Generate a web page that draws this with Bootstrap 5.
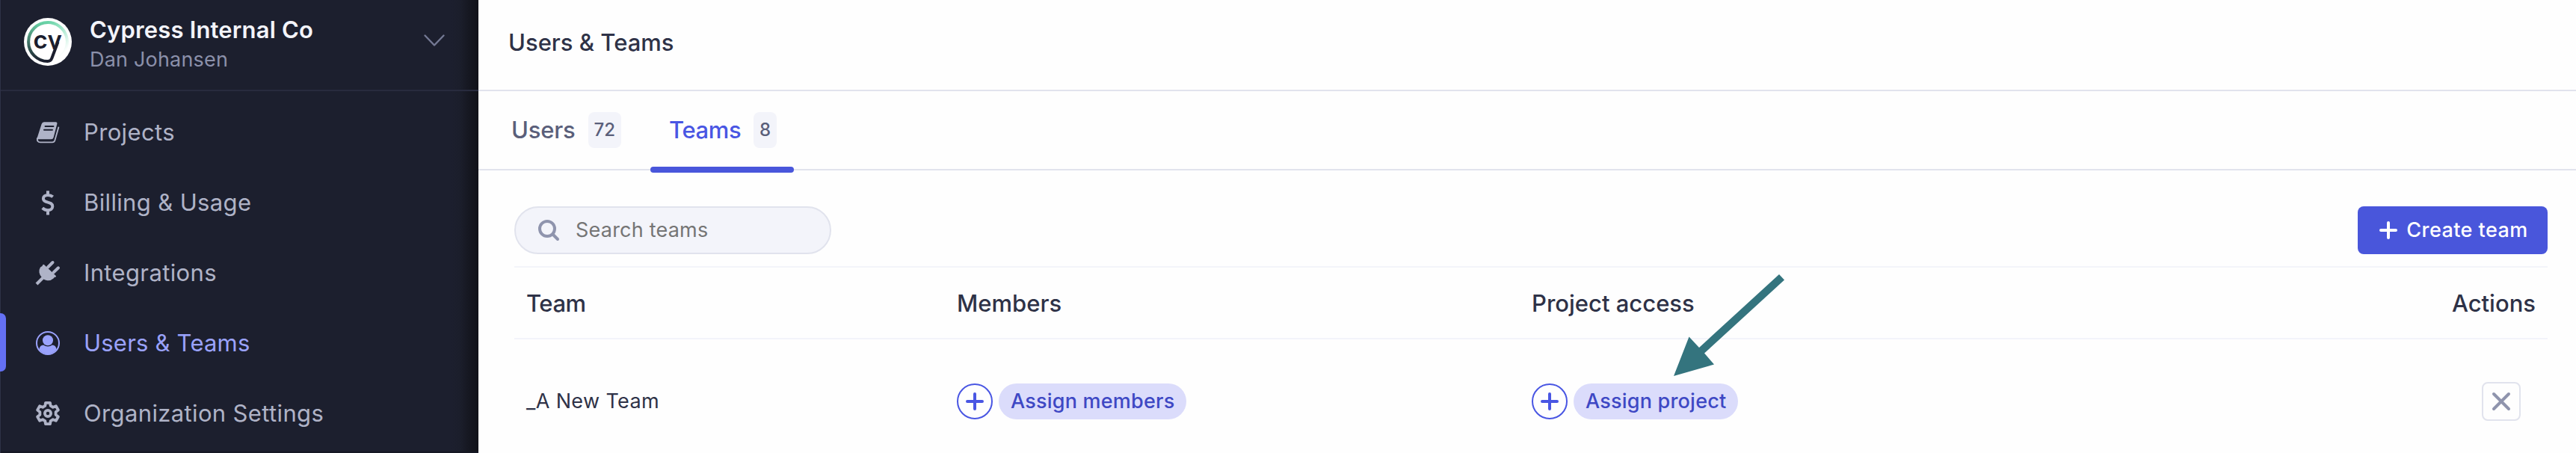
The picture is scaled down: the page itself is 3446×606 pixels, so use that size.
<!DOCTYPE html>
<html lang="en">
<head>
<meta charset="utf-8">
<meta name="viewport" content="width=device-width, initial-scale=1">
<title>Users &amp; Teams</title>
<link rel="stylesheet" href="https://cdn.jsdelivr.net/npm/bootstrap@5.3.0/dist/css/bootstrap.min.css">
<style>
  body { font-family: Inter, "Liberation Sans", sans-serif; font-size: 31px; line-height: 40px; color: #2e3247; background: #fefefe; }
  svg { display: block; flex: none; overflow: visible; }
  .app { height: 606px; }
  .sidebar { width: 640px; background: linear-gradient(to left, #111219 0, #161822 14px, #1b1e2b 24px, #1c1f2e 36px); border-left: 1px solid #2e3247; box-shadow: inset 0 -2px 1px #161824; }
  .org { height: 122px; padding: 0 45px 0 31px; border-bottom: 2px solid #282b3e; }
  .org-logo { margin-top: -8px; }
  .org-caret { margin-top: -12px; }
  .org-name { font-weight: 600; color: #f3f4fa; letter-spacing: .16px; }
  .org-user { font-size: 27px; color: #8b90aa; letter-spacing: .19px; }
  .side-nav { padding-top: 7px; }
  .side-nav .nav-link { height: 94px; padding: 1px 0 0 47px; gap: 32px; color: #afb3c7; letter-spacing: .36px; }
  .side-nav .nav-link.active { color: #9aa2fc; letter-spacing: .21px; }
  .side-nav .nav-link.active::before { content: ""; position: absolute; left: -1px; top: 8px; width: 8px; height: 78px; border-radius: 0 7px 7px 0; background: #6470f3; }
  .topbar { height: 122px; padding: 0 40px 6px; border-bottom: 2px solid #e1e3ed; font-weight: 500; }
  .tabs { height: 106px; padding-left: 20px; gap: 15px; border-bottom: 2px solid #e1e3ed; }
  .tabs .nav-link { width: 195px; height: 104px; padding: 0 24px; justify-content: space-between; font-weight: 500; color: #5a5f7a; letter-spacing: -.21px; }
  .tabs .nav-link.active { width: 192px; padding: 0 23px 0 25px; color: #4956e3; letter-spacing: -.37px; }
  .tabs .nav-link.active::after { content: ""; position: absolute; left: 0; right: 0; bottom: -5px; height: 8px; border-radius: 4px; background: #4956db; }
  .count { height: 48px; line-height: 48px; padding: 0 8px; border-radius: 8px; background: #f3f4fa; color: #5a5f7a; font-size: 24px; letter-spacing: 0; }
  .content { padding: 48px 38px 0 48px; }
  .search { width: 424px; height: 64px; padding-left: 30px; gap: 22px; border: 2px solid #e1e3ed; border-radius: 32px; background: #f3f4fa; }
  .search input { font-size: 27px; letter-spacing: .22px; }
  .search input::placeholder { color: #757575; opacity: 1; }
  .btn-create { width: 254px; height: 64px; border-radius: 8px; background: #4956db; color: #fff; font-size: 27px; font-weight: 500; gap: 12px; letter-spacing: .45px; padding-left: 3px !important; }
  .team-table { margin: 16px 0 0; table-layout: fixed; border-collapse: separate; border-spacing: 0; --bs-table-bg: transparent; border-top: 2px solid #f3f4fa; }
  .team-table > :not(caption) > * > * { padding: 0 16px; vertical-align: middle; border-bottom: 0; color: #2e3247; }
  .team-table th { height: 96px; padding-bottom: 1px !important; font-weight: 500; box-shadow: inset 0 -2px #f3f4fa; }
  .team-table td { height: 166px; font-size: 27px; }
  .col-team { width: 576px; } .col-members { width: 769px; }
  .tight { letter-spacing: -.45px; }
  .team-name { letter-spacing: .37px; }
  .circle-btn { width: 48px; height: 48px; border: 2px solid #4956e3; border-radius: 50%; }
  .pill { height: 48px; line-height: 48px; padding: 0 16px; border-radius: 24px; background: #dbdcfb; color: #3e48c4; font-weight: 500; letter-spacing: .21px; }
  .btn-remove { width: 52px; height: 52px; margin-right: 20px; border: 2px solid #e1e3ed; border-radius: 8px; }
  .arrow { left: 2239px; top: 367px; }
</style>
</head>
<body>
<div class="app d-flex position-relative overflow-hidden">
  <aside class="sidebar flex-shrink-0 d-flex flex-column">
    <div class="org d-flex align-items-center">
      <svg class="org-logo" width="64" height="64" viewBox="0 0 64 64">
        <defs>
          <linearGradient id="gl" x1="0" y1="1" x2="0" y2="0"><stop offset="0" stop-color="#1b1e2e"/><stop offset=".25" stop-color="#2c4a4a"/><stop offset=".7" stop-color="#539a80"/><stop offset="1" stop-color="#69d3a7"/></linearGradient>
          <linearGradient id="gr" x1="0" y1="0" x2=".6" y2="1"><stop offset="0" stop-color="#69d3a7"/><stop offset=".45" stop-color="#a3e7cb"/><stop offset="1" stop-color="#fff"/></linearGradient>
          <clipPath id="letters"><rect width="64" height="42"/></clipPath>
        </defs>
        <circle cx="32" cy="32" r="32" fill="#fff"/>
        <path d="M32.200 6A26 26 0 0 0 32 58" fill="none" stroke="url(#gl)" stroke-width="4"/>
        <path d="M32 6A26 26 0 0 1 47 53.200" fill="none" stroke="url(#gr)" stroke-width="4"/>
        <path d="M45.500 32L37.300 54Q36 58 31.500 58" fill="none" stroke="#1b1e2e" stroke-width="4"/>
        <text clip-path="url(#letters)" x="12.500" y="40.500" font-size="33" font-weight="600" fill="#1b1e2e" textLength="38.500" lengthAdjust="spacing">cy</text>
      </svg>
      <div class="ms-4 flex-grow-1">
        <div class="org-name">Cypress Internal Co</div>
        <div class="org-user">Dan Johansen</div>
      </div>
      <svg class="org-caret" width="28" height="16" viewBox="0 0 28 16" fill="none" stroke="#747994" stroke-width="2.400" stroke-linecap="round" stroke-linejoin="round"><path d="M1.500 1.500L14 14.500L26.500 1.500"/></svg>
    </div>
    <nav class="side-nav nav flex-column flex-nowrap">
      <a class="nav-link d-flex align-items-center" href="#">
        <svg width="32" height="32" viewBox="0 0 32 32"><path fill="currentColor" d="M11 2.300H26.500Q29 2.300 28.300 5L23.600 23Q23 25.200 20.500 25.200H2.500Q1.300 25 2 22.500L7.600 5Q8.400 2.300 11 2.300Z"/><path d="M1.900 24Q1.300 29.400 6 29.400H22Q24.500 29.400 25.300 27L30.300 9.500" fill="none" stroke="currentColor" stroke-width="1.900" stroke-linecap="round"/><path d="M12.500 8H23.500M11 12.800H22" stroke="#1c1f2e" stroke-width="1.900" stroke-linecap="round"/></svg>
        Projects</a>
      <a class="nav-link d-flex align-items-center" href="#">
        <svg width="32" height="32" viewBox="0 0 32 32" fill="none" stroke="currentColor" stroke-width="4"><path d="M22.700 8.300C20.500 6.400 18.200 5.900 16 5.900C12 5.900 9.900 8 9.900 10.700C9.900 17.500 22.300 13.700 22.300 21C22.300 24.300 19.500 26.200 16 26.200C13.300 26.200 11 25.300 8.700 23.200M16 .2V5M16 27V32.500"/></svg>
        Billing &amp; Usage</a>
      <a class="nav-link d-flex align-items-center" href="#">
        <svg width="32" height="32" viewBox="0 0 32 32" stroke="currentColor" stroke-linecap="round"><path fill="currentColor" stroke="none" d="M9.500 5Q10.500 4.500 11.500 5.500L26.800 20Q27.500 21 26.500 21.500Q24.500 21.500 23.500 23.500A10.500 10.500 0 0 1 8 22A10.500 10.500 0 0 1 6 8.500Q9 7 9.500 5Z"/><path d="M16 8.500L22.500 2M23.500 15.500L30 9.300" stroke-width="4"/><path d="M9.500 22.500L1 31" stroke-width="4" stroke-linecap="butt"/></svg>
        Integrations</a>
      <a class="nav-link active position-relative d-flex align-items-center" href="#">
        <svg width="32" height="32" viewBox="0 0 32 32" fill="currentColor"><circle cx="16" cy="16" r="15" fill="none" stroke="currentColor" stroke-width="2"/><circle cx="16" cy="12.200" r="7"/><path d="M4.200 24.500C5 20.500 7 18.500 10 18.500C14 21 18 21 22 18.500C25 18.500 27 20.500 27.800 24.500A15 15 0 0 1 4.200 24.500Z"/></svg>
        Users &amp; Teams</a>
      <a class="nav-link d-flex align-items-center" href="#">
        <svg width="32" height="32" viewBox="-16 -16 32 32" fill="none" stroke="currentColor" stroke-width="3.800" stroke-linejoin="round"><path d="M-3.700-10.100L-3-14.100H3L3.700-10.100L6.900-8.250L10.880-9.750L13.880-4.550L10.600-1.850V1.850L13.880 4.550L10.880 9.750L6.900 8.250L3.700 10.100L3 14.100H-3L-3.700 10.100L-6.900 8.250L-10.880 9.750L-13.880 4.550L-10.600 1.850V-1.850L-13.880-4.550L-10.880-9.750L-6.900-8.250Z"/><circle r="4.100"/></svg>
        Organization Settings</a>
    </nav>
  </aside>
  <main class="flex-grow-1">
    <header class="topbar d-flex align-items-center">Users &amp; Teams</header>
    <nav class="tabs nav flex-nowrap">
      <a class="nav-link d-flex align-items-center" href="#">Users <span class="count">72</span></a>
      <a class="nav-link active position-relative d-flex align-items-center" href="#">Teams <span class="count">8</span></a>
    </nav>
    <section class="content">
      <div class="d-flex justify-content-between">
        <label class="search d-flex align-items-center">
          <svg width="28" height="28" viewBox="0 0 28 28" fill="none" stroke="#8f94ad" stroke-width="4" stroke-linecap="round"><circle cx="12" cy="12" r="10"/><path d="M19.500 19.500L26 26"/></svg>
          <input class="form-control border-0 bg-transparent shadow-none p-0" type="text" placeholder="Search teams">
        </label>
        <button class="btn-create btn border-0 p-0 d-flex align-items-center justify-content-center">
          <svg width="24" height="24" viewBox="0 0 24 24" stroke="#fff" stroke-width="4" stroke-linecap="round"><path d="M12 2V22M2 12H22"/></svg>
          Create team</button>
      </div>
      <table class="team-table table">
        <thead>
          <tr><th class="col-team tight">Team</th><th class="col-members">Members</th><th>Project access</th><th class="text-end">Actions</th></tr>
        </thead>
        <tbody>
          <tr>
            <td class="team-name">_A New Team</td>
            <td><div class="d-flex gap-2"><span class="circle-btn d-flex align-items-center justify-content-center"><svg width="24" height="24" viewBox="0 0 24 24" stroke="#4956e3" stroke-width="4" stroke-linecap="round"><path d="M12 2V22M2 12H22"/></svg></span><span class="pill">Assign members</span></div></td>
            <td><div class="d-flex gap-2"><span class="circle-btn d-flex align-items-center justify-content-center"><svg width="24" height="24" viewBox="0 0 24 24" stroke="#4956e3" stroke-width="4" stroke-linecap="round"><path d="M12 2V22M2 12H22"/></svg></span><span class="pill">Assign project</span></div></td>
            <td><div class="d-flex justify-content-end"><button class="btn-remove btn p-0 d-flex align-items-center justify-content-center"><svg width="24" height="24" viewBox="0 0 24 24" stroke="#8f94ad" stroke-width="4" stroke-linecap="round"><path d="M2 2L22 22M22 2L2 22"/></svg></button></div></td>
          </tr>
        </tbody>
      </table>
    </section>
  </main>
  <svg class="arrow position-absolute" width="148" height="136" viewBox="0 0 148 136"><path fill="#34747e" d="M141 0L148 7.500L41 105.500L54 120.500L0 136L20.500 83.500L34 98Z"/></svg>
</div>
<script src="https://cdn.jsdelivr.net/npm/bootstrap@5.3.0/dist/js/bootstrap.bundle.min.js"></script>
</body>
</html>
